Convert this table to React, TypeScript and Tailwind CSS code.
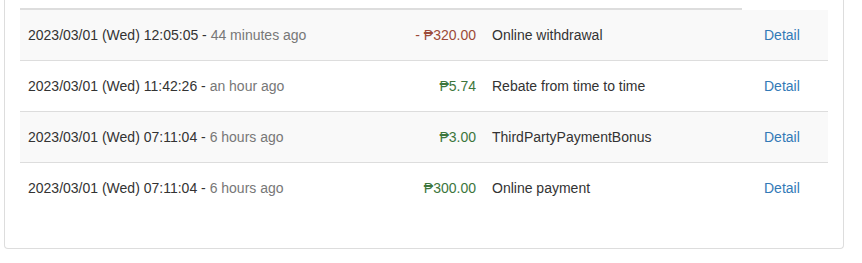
import React from "react";

type Row = {
  date: string;
  ago: string;
  amount: string;
  negative?: boolean;
  desc: string;
};

const rows: Row[] = [
  { date: "2023/03/01 (Wed) 12:05:05", ago: "44 minutes ago", amount: "₱320.00", negative: true, desc: "Online withdrawal" },
  { date: "2023/03/01 (Wed) 11:42:26", ago: "an hour ago", amount: "₱5.74", desc: "Rebate from time to time" },
  { date: "2023/03/01 (Wed) 07:11:04", ago: "6 hours ago", amount: "₱3.00", desc: "ThirdPartyPaymentBonus" },
  { date: "2023/03/01 (Wed) 07:11:04", ago: "6 hours ago", amount: "₱300.00", desc: "Online payment" },
];

export default function App() {
  return (
    <div
      className="w-[862px] h-[263px] bg-white text-[14px] leading-[20px] text-[#333]"
      style={{ fontFamily: '"Liberation Sans", Arial, sans-serif' }}
    >
      <div className="ml-[4px] w-[840px] h-[249px] border border-t-0 border-[#ddd] rounded-b-[4px] px-[15px] pb-[35px]">
        <div className="w-[808px]">
          <div className="h-[10px] w-[722px] border-b-2 border-[#ddd]" />
          {rows.map((r, i) => (
            <div
              key={i}
              className={
                "flex items-center h-[51px] border-b border-[#ddd] last:h-[50px] last:border-b-0 " +
                (i % 2 === 0 ? "bg-[#f9f9f9]" : "bg-white")
              }
            >
              <div className="w-[360px] pl-[8px] whitespace-nowrap">
                {r.date} - <span className="text-[#777]">{r.ago}</span>
              </div>
              <div
                className={
                  "w-[104px] pr-[8px] text-right whitespace-nowrap " +
                  (r.negative ? "text-[#9c4a38]" : "text-[#3c763d]")
                }
              >
                {r.negative ? "- " : ""}
                {r.amount}
              </div>
              <div className="w-[272px] pl-[8px] whitespace-nowrap">{r.desc}</div>
              <div className="w-[72px] pl-[8px]">
                <a className="text-[#337ab7]" href="#">
                  Detail
                </a>
              </div>
            </div>
          ))}
        </div>
      </div>
    </div>
  );
}
